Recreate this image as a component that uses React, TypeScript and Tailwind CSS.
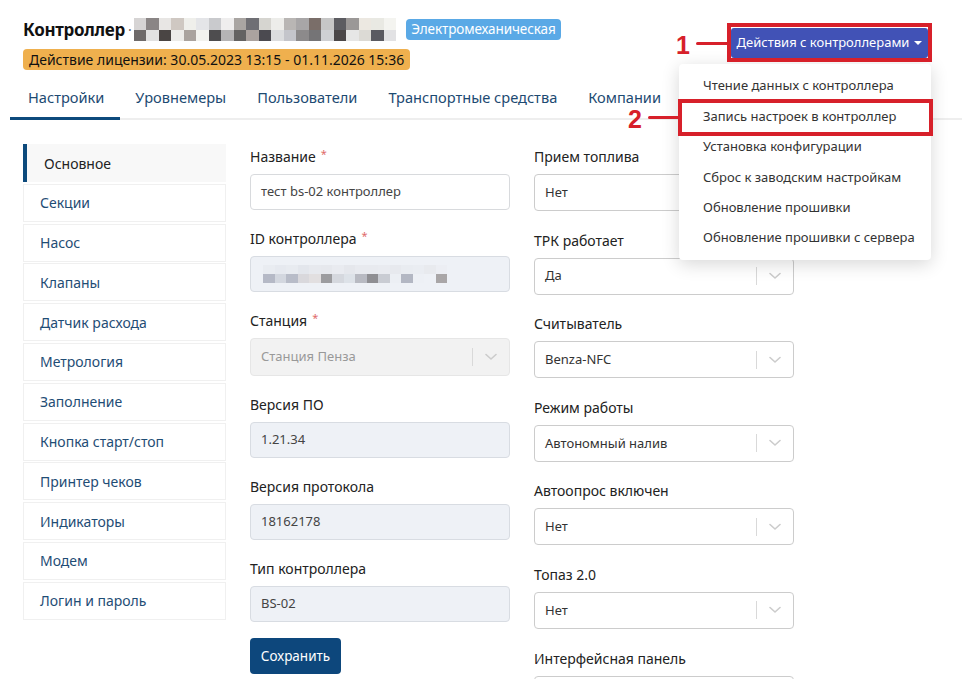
import React from "react";

const titleMosaic: string[][] = [
  ["#d6d4d4", "#8a8585", "#e8e6e4", "#cfc8c2", "#efefeb", "#e4e5e8", "#c9cacd", "#efeeee", "#a9a5a2", "#6f6f74", "#d6d5d0", "#ededea", "#b9b6b4", "#a8a6a7", "#7a6e69", "#c6c6c6", "#5c5c61", "#9b9897", "#ece8e1", "#e9e9e3", "#f4f4f0"],
  ["#6e6a6a", "#e2e2e2", "#4a4544", "#edece9", "#aaa39e", "#f3f3ef", "#4e4d4f", "#b5b4b5", "#636261", "#aba39f", "#4b4a50", "#dcdddf", "#c4c5cb", "#8c8a8b", "#757476", "#cfd0d3", "#4b4748", "#e6e6e6", "#dcdad5", "#5a5a61", "#e2e2e4"],
];

const idMosaic: string[][] = [
  ["#e9ecf1", "#e6e9ef", "#e8ebf0", "#e3e6ec", "#e7e9ee", "#e6e8ed", "#e9ebf0", "#e5e7ec", "#e8eaef", "#e8eaef", "#e9ebf0", "#e7e9ee", "#e9ecf1", "#eaedf2", "#e8eaee", "#eceef3"],
  ["#b5b9c6", "#d3d7df", "#b8bcc8", "#d9d8dc", "#e2dfe0", "#9c9c9f", "#d5d8de", "#dde2e8", "#b8bac2", "#8f8f93", "#c9ccd3", "#eceff4", "#b3b7c3", "#edf0f5", "#eef1f6", "#a9a6a7"],
];

const sideItems = [
  "Основное",
  "Секции",
  "Насос",
  "Клапаны",
  "Датчик расхода",
  "Метрология",
  "Заполнение",
  "Кнопка старт/стоп",
  "Принтер чеков",
  "Индикаторы",
  "Модем",
  "Логин и пароль",
];

const menuItems = [
  "Чтение данных с контроллера",
  "Запись настроек в контроллер",
  "Установка конфигурации",
  "Сброс к заводским настройкам",
  "Обновление прошивки",
  "Обновление прошивки с сервера",
];

function Chevron() {
  return (
    <svg width="12" height="8" viewBox="0 0 12 8" fill="none">
      <path d="M1 1.5 L6 6 L11 1.5" stroke="#cccccc" strokeWidth="1.6" strokeLinecap="round" strokeLinejoin="round" />
    </svg>
  );
}

function Label({ text, req }: { text: string; req?: boolean }) {
  return (
    <div className="h-[21px] leading-[21px] text-[14px] text-[#222] mb-[7px]">
      {text}
      {req && <span className="ml-[5px] text-[11px] align-top leading-[16px] text-[#e06a6a]">*</span>}
    </div>
  );
}

function Select({ value, disabled, h = "h-[37px]" }: { value: string; disabled?: boolean; h?: string }) {
  return (
    <div
      className={
        "flex items-center rounded-[4px] border " +
        h +
        " " +
        (disabled ? "bg-[#f2f2f2] border-[#e6e6e6]" : "bg-white border-[#cccccc]")
      }
    >
      <div className={"flex-1 pl-[10px] text-[13px] " + (disabled ? "text-[#999]" : "text-[#333]")}>{value}</div>
      <div className="w-px h-[18px] bg-[#d9d9d9]" />
      <div className="w-[36px] flex items-center justify-center">
        <Chevron />
      </div>
    </div>
  );
}

function ReadOnly({ children }: { children: React.ReactNode }) {
  return (
    <div className="h-[36px] flex items-center rounded-[4px] border border-[#d8dce2] bg-[#eef1f6] pl-[10px] text-[13px] text-[#444]">
      {children}
    </div>
  );
}

export default function App() {
  return (
    <div className="relative w-[962px] h-[679px] overflow-hidden bg-white font-['Noto_Sans',sans-serif] text-[#222]">
      {/* header */}
      <div className="flex justify-between pl-[23px] pr-[34px] pt-[18px]">
        <div>
          <div className="flex items-center h-[23px]">
            <span className="text-[17px] font-bold text-[#111] leading-none tracking-[-0.3px]">Контроллер</span>
            <span className="ml-[3px] text-[14px] text-[#666] leading-none">·</span>
            <div className="ml-[2px] flex flex-col">
              {titleMosaic.map((row, i) => (
                <div key={i} className="flex">
                  {row.map((c, j) => (
                    <div key={j} className="w-[12.5px] h-[11.5px]" style={{ backgroundColor: c }} />
                  ))}
                </div>
              ))}
            </div>
            <span className="ml-[10px] bg-[#5aa9e6] text-white text-[13.5px] leading-[21px] h-[21px] px-[5px] rounded-[4px] tracking-[-0.1px]">
              Электромеханическая
            </span>
          </div>
          <div className="mt-[8px] inline-flex items-center h-[21px] bg-[#efb04e] rounded-[4px] px-[6px] text-[14px] text-[#111]">
            Действие лицензии: 30.05.2023 13:15 - 01.11.2026 15:36
          </div>
        </div>
        <div className="mt-[10px] w-[197px] h-[30px] flex items-center justify-center gap-[5px] bg-[#4152b6] text-white text-[13px] rounded-[3px]">
          Действия с контроллерами
          <span className="w-0 h-0 border-x-[4px] border-x-transparent border-t-[4px] border-t-white" />
        </div>
      </div>

      {/* tabs */}
      <div className="mt-[8px] ml-[10px] flex border-b-2 border-[#eeeeee]">
        {[
          "Настройки",
          "Уровнемеры",
          "Пользователи",
          "Транспортные средства",
          "Компании",
        ].map((t, i) => (
          <div
            key={t}
            className={
              "h-[41px] -mb-[2px] pb-[2px] flex items-center px-[15.5px] text-[14.6px] leading-[20px] text-[#1d4a72] border-b-[3px] " +
              (i === 0 ? "border-[#0d4a7c] pl-[18px]" : "border-transparent")
            }
          >
            {t}
          </div>
        ))}
      </div>

      {/* content */}
      <div className="flex gap-[24px] pl-[23px] pt-[24px]">
        {/* sidebar */}
        <div className="w-[203px] flex flex-col gap-[1.8px]">
          {sideItems.map((s, i) => (
            <div
              key={s}
              className={
                "h-[38px] flex items-center text-[14px] " +
                (i === 0
                  ? "bg-[#f8f8f8] border-l-4 border-[#0d4a7c] pl-[17px] text-[#222]"
                  : "bg-white border border-[#f0f0f0] pl-[16px] text-[#1f4d75]")
              }
            >
              {s}
            </div>
          ))}
        </div>

        {/* middle column */}
        <div className="w-[260px] flex flex-col pt-[2px]">
          <div className="mb-[18px]">
            <Label text="Название" req />
            <div className="h-[36px] flex items-center rounded-[4px] border border-[#d8dadd] bg-white pl-[10px] text-[13px] text-[#444]">
              тест bs-02 контроллер
            </div>
          </div>
          <div className="mb-[18px]">
            <Label text="ID контроллера" req />
            <div className="h-[36px] flex items-center rounded-[4px] border border-[#d8dce2] bg-[#eef1f6] pl-[12px]">
              <div className="flex flex-col">
                {idMosaic.map((row, i) => (
                  <div key={i} className="flex">
                    {row.map((c, j) => (
                      <div key={j} className="w-[11.5px] h-[9px]" style={{ backgroundColor: c }} />
                    ))}
                  </div>
                ))}
              </div>
            </div>
          </div>
          <div className="mb-[18px]">
            <Label text="Станция" req />
            <Select value="Станция Пенза" disabled h="h-[38px]" />
          </div>
          <div className="mb-[18px]">
            <Label text="Версия ПО" />
            <ReadOnly>1.21.34</ReadOnly>
          </div>
          <div className="mb-[18px]">
            <Label text="Версия протокола" />
            <ReadOnly>18162178</ReadOnly>
          </div>
          <div className="mb-[16px]">
            <Label text="Тип контроллера" />
            <ReadOnly>BS-02</ReadOnly>
          </div>
          <div className="w-[91px] h-[36px] flex items-center justify-center rounded-[4px] bg-[#0d477c] text-white text-[13.5px]">
            Сохранить
          </div>
        </div>

        {/* right column */}
        <div className="w-[260px] flex flex-col pt-[2px]">
          {[
            ["Прием топлива", "Нет"],
            ["ТРК работает", "Да"],
            ["Считыватель", "Benza-NFC"],
            ["Режим работы", "Автономный налив"],
            ["Автоопрос включен", "Нет"],
            ["Топаз 2.0", "Нет"],
            ["Интерфейсная панель", ""],
          ].map(([l, v]) => (
            <div key={l} className="mb-[18.6px]">
              <Label text={l} />
              <Select value={v} />
            </div>
          ))}
        </div>
      </div>

      {/* dropdown menu */}
      <div className="absolute left-[679px] top-[64px] w-[252px] py-[7px] bg-white rounded-[4px] shadow-[0_4px_18px_rgba(0,0,0,0.16)]">
        {menuItems.map((m) => (
          <div key={m} className="h-[30.4px] flex items-center pl-[24px] text-[13px] text-[#333]">
            {m}
          </div>
        ))}
      </div>

      {/* annotations */}
      <div className="absolute left-[727px] top-[23px] w-[205px] h-[39px] border-[4px] border-[#d7202a]" />
      <div className="absolute left-[676px] top-[33px] font-['Liberation_Sans',sans-serif] text-[25px] font-bold leading-none text-[#d7202a]">1</div>
      <div className="absolute left-[696px] top-[42px] w-[31px] h-[3px] bg-[#d7202a] rounded-l-full" />

      <div className="absolute left-[678px] top-[99px] w-[255px] h-[37px] border-[4px] border-[#d7202a]" />
      <div className="absolute left-[628px] top-[107px] font-['Liberation_Sans',sans-serif] text-[25px] font-bold leading-none text-[#d7202a]">2</div>
      <div className="absolute left-[648px] top-[116px] w-[30px] h-[3px] bg-[#d7202a] rounded-l-full" />
    </div>
  );
}
